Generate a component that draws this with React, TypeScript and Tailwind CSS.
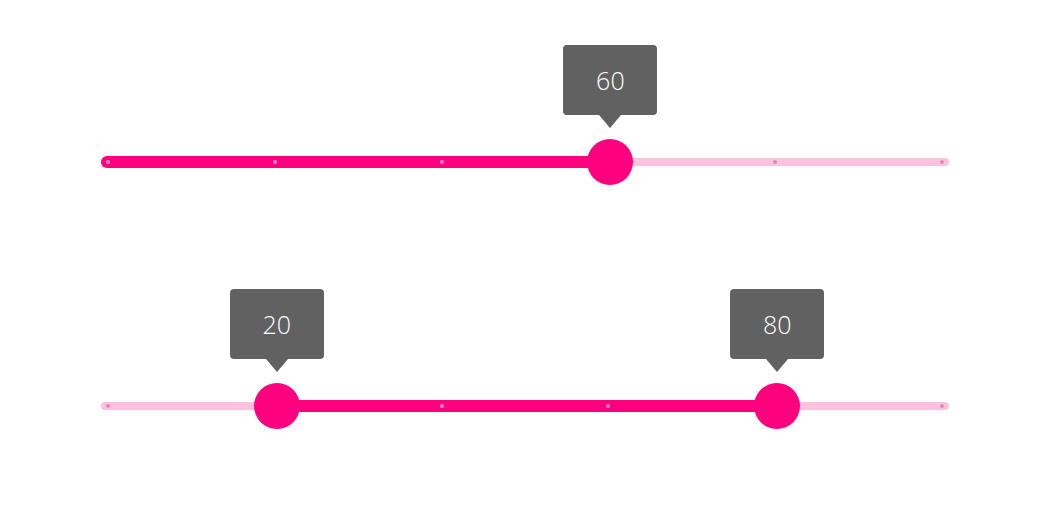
import React from 'react';

const PINK = 'bg-[#ff007f]';
const marks = [0, 20, 40, 60, 80, 100];

interface SliderProps {
  values: number[];
}

const Tooltip = ({ value }: { value: number }) => (
  <div className="absolute bottom-[57px] left-1/2 flex -translate-x-1/2 flex-col items-center">
    <div className="flex h-[70px] w-[94px] items-center justify-center rounded-[4px] bg-[#616161] pt-[2px] text-[25px] font-light text-white">
      {value}
    </div>
    <div className="h-0 w-0 border-x-[11px] border-t-[13px] border-x-transparent border-t-[#616161]" />
  </div>
);

const Slider = ({ values }: SliderProps) => {
  const range = values.length === 1 ? [0, values[0]] : values;
  const isActive = (m: number) => m >= range[0] && m <= range[1];

  return (
    <div className="relative flex h-[48px] items-center">
      <div className="h-2 w-full rounded-full bg-[#ffc2de]" />
      <div className="absolute inset-y-0 left-[7px] right-[7px]">
        {values.length === 1 && (
          <div
            className={`absolute top-[18px] -left-[7px] h-3 rounded-l-full ${PINK}`}
            style={{ width: `calc(${values[0]}% + 8px)` }}
          />
        )}
        {values.length === 2 && (
          <div
            className={`absolute top-[18px] h-3 ${PINK}`}
            style={{ left: `${values[0]}%`, width: `${values[1] - values[0]}%` }}
          />
        )}
        {marks.map((m) => (
          <div
            key={m}
            className={`absolute top-[22px] h-1 w-1 -translate-x-1/2 rounded-full ${
              isActive(m) ? 'bg-[#ff8cc6]' : 'bg-[#e784b1]'
            }`}
            style={{ left: `${m}%` }}
          />
        ))}
        {values.map((v) => (
          <div
            key={v}
            className="absolute top-px h-[46px] w-[46px] -translate-x-1/2"
            style={{ left: `calc(${v}% + 2px)` }}
          >
            <div className={`h-full w-full rounded-full ${PINK}`} />
            <Tooltip value={v} />
          </div>
        ))}
      </div>
    </div>
  );
};

export default function App() {
  return (
    <div
      className="flex h-[525px] w-[1056px] flex-col gap-[196px] bg-white pt-[138px] pl-[101px] pr-[107px]"
      style={{ fontFamily: '"Open Sans", "Noto Sans", sans-serif' }}
    >
      <Slider values={[60]} />
      <Slider values={[20, 80]} />
    </div>
  );
}
